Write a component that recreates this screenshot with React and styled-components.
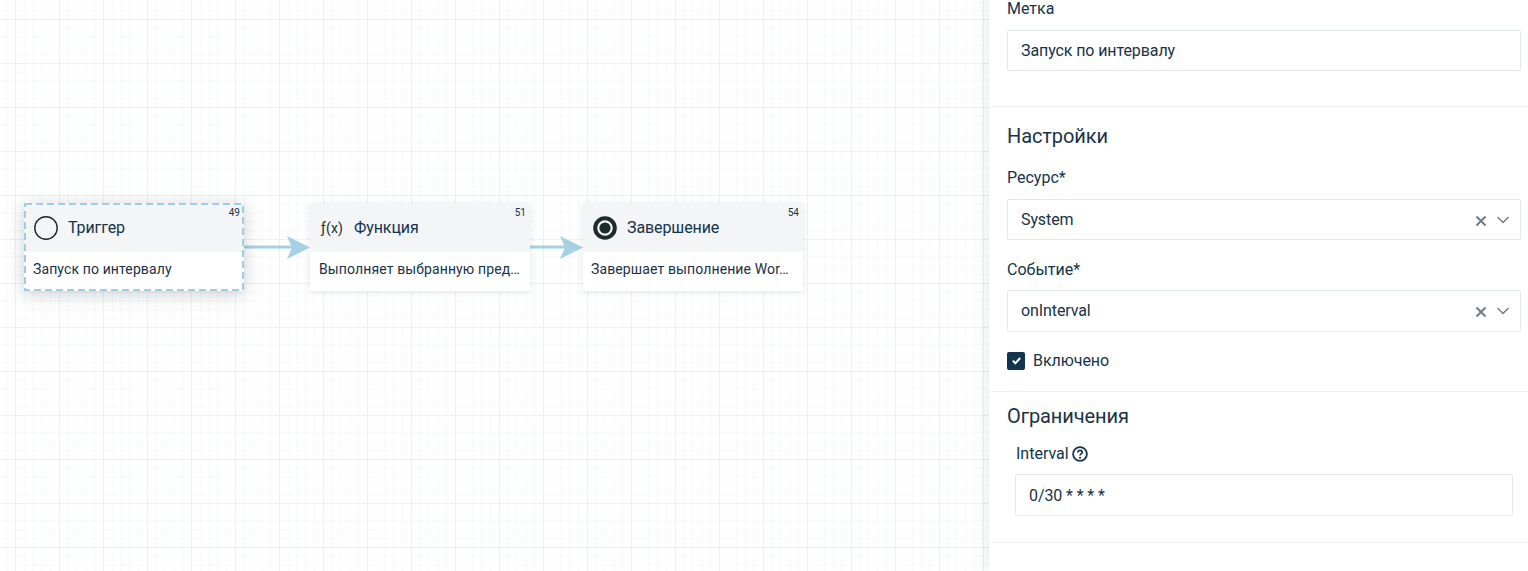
import React from 'react'
import styled, { createGlobalStyle } from 'styled-components'

const GlobalStyle = createGlobalStyle`
  html, body { margin: 0; padding: 0; height: 100%; overflow: hidden; }
  body { font-family: Roboto, "Noto Sans", sans-serif; color: #12344d; background: #fff; }
  #root { height: 100%; }
`

const Page = styled.div`
  display: flex;
  width: 1528px;
  height: 571px;
  overflow: hidden;
`

const Canvas = styled.div`
  position: relative;
  flex: 1;
  background-color: #fff;
  background-image:
    linear-gradient(#edf0f4 1px, transparent 1px),
    linear-gradient(90deg, #edf0f4 1px, transparent 1px),
    linear-gradient(#f6f8fa 1px, transparent 1px),
    linear-gradient(90deg, #f6f8fa 1px, transparent 1px);
  background-size: 44px 44px, 44px 44px, 8.8px 8.8px, 8.8px 8.8px;
  background-position: 0 19px, 15px 0, 0 1.4px, 6.2px 0;
`

const Edges = styled.svg`
  position: absolute;
  left: 0;
  top: 0;
  pointer-events: none;
`

const Node = styled.div`
  position: absolute;
  top: 203px;
  left: ${p => p.$x}px;
  width: 220px;
  height: 88px;
  box-sizing: border-box;
  background: #fff;
  box-shadow: ${p => (p.$selected ? '0 3px 16px rgba(24, 40, 50, 0.22)' : '0 1px 6px rgba(24, 50, 71, 0.12)')};
`

const DashFrame = styled.svg`
  position: absolute;
  left: 0;
  top: 0;
  width: 220px;
  height: 88px;
  pointer-events: none;
`

const NodeHead = styled.div`
  display: flex;
  align-items: center;
  height: 49px;
  padding-left: ${p => p.$pad}px;
  gap: ${p => p.$gap}px;
  background: #f3f5f7;
  font-size: 16px;
  letter-spacing: -0.1px;
  color: #12344d;
`

const NodeId = styled.span`
  position: absolute;
  top: 4px;
  right: 4px;
  font-size: 10px;
  line-height: 12px;
  color: #12344d;
`

const NodeText = styled.div`
  padding: 9px ${p => p.$pad}px 0;
  font-size: 14px;
  line-height: 17px;
  letter-spacing: 0.12px;
  color: #183247;
  white-space: nowrap;
`

const FxIcon = styled.span`
  font-size: 14px;
  color: #1c2b2e;
  letter-spacing: 0.2px;
  width: 23px;
`

const Panel = styled.aside`
  position: relative;
  width: 539px;
  height: 571px;
  overflow: hidden;
  flex-shrink: 0;
  background: #fff;
  box-shadow: -4px 0 10px rgba(24, 50, 71, 0.08);
`

const PanelScroll = styled.div`
  display: flow-root;
  margin-top: -1px;
`

const Section = styled.section`
  box-sizing: border-box;
  height: ${p => p.$h}px;
  padding: ${p => p.$top}px 7px 0 18px;
  border-bottom: 1px solid #f0f2f5;
`

const Heading = styled.h3`
  margin: 0 0 ${p => p.$mb || 0}px;
  font-size: 20px;
  line-height: 24px;
  font-weight: 400;
  letter-spacing: -0.1px;
  color: #183247;
`

const Label = styled.label`
  display: flex;
  align-items: center;
  gap: 3px;
  font-size: 16px;
  line-height: 20px;
  color: #12344d;
  margin-bottom: ${p => p.$mb || 11}px;
`

const Field = styled.div`
  display: flex;
  align-items: center;
  box-sizing: border-box;
  height: ${p => p.$h || 41}px;
  padding: 0 13px ${p => p.$pb || 0}px;
  background: #fff;
  border: 1px solid #e3e8ed;
  border-radius: 2px;
  font-size: 16px;
  letter-spacing: -0.1px;
  color: #183247;
  margin-bottom: ${p => p.$mb || 0}px;
`

const FieldValue = styled.span`
  flex: 1;
`

const Controls = styled.span`
  display: flex;
  align-items: center;
  gap: 10px;
  margin-right: -2px;
`

const CheckRow = styled.div`
  display: flex;
  align-items: center;
  gap: 9px;
  margin-top: 19px;
  font-size: 16px;
  letter-spacing: -0.05px;
  color: #12344d;
`

const CheckBox = styled.span`
  display: flex;
  align-items: center;
  justify-content: center;
  width: 18px;
  height: 18px;
  margin-right: -1px;
  background: #12344d;
  border-radius: 2px;
`

const Indented = styled.div`
  padding: 0 8px;
  margin-top: 16px;
`

const IndentedLabel = styled(Label)`
  padding-left: 1px;
`

const CrossIcon = styled.svg`
  margin-top: 3px;
`

const Cross = () => (
  <CrossIcon width="12" height="12" viewBox="0 0 12 12">
    <path d="M1.5 1.5 L10.5 10.5 M10.5 1.5 L1.5 10.5" stroke="#6f7c87" strokeWidth="2" fill="none" />
  </CrossIcon>
)

const Chevron = () => (
  <svg width="12" height="8" viewBox="0 0 12 8">
    <path d="M0.5 1 L6 6.5 L11.5 1" stroke="#6f7c87" strokeWidth="1.5" fill="none" />
  </svg>
)

const Arrow = ({ x1, x2 }) => (
  <>
    <line x1={x1} y1="247" x2={x2 - 18} y2="247" stroke="#a6d0e4" strokeWidth="3" />
    <polygon points={`${x2 - 23},236 ${x2},247.5 ${x2 - 23},259 ${x2 - 18},247.5`} fill="#a6d0e4" />
  </>
)

export default function App() {
  return (
    <Page>
      <GlobalStyle />
      <Canvas>
        <Edges width="989" height="571">
          <Arrow x1={244} x2={310} />
          <Arrow x1={530} x2={583} />
        </Edges>
        <Node $x={24} $selected>
          <NodeHead $pad={10} $gap={10}>
            <svg width="24" height="24" viewBox="0 0 24 24">
              <circle cx="12" cy="12" r="11.2" fill="none" stroke="#1c2b2e" strokeWidth="1.4" />
            </svg>
            Триггер
          </NodeHead>
          <NodeId>49</NodeId>
          <NodeText $pad={9}>Запуск по интервалу</NodeText>
          <DashFrame viewBox="0 0 220 88">
            <rect x="1" y="1" width="218" height="86" fill="none" stroke="#9fcde4" strokeWidth="2" strokeDasharray="7 4" />
          </DashFrame>
        </Node>
        <Node $x={310}>
          <NodeHead $pad={11} $gap={10}>
            <FxIcon>ƒ(x)</FxIcon>
            Функция
          </NodeHead>
          <NodeId>51</NodeId>
          <NodeText $pad={9}>Выполняет выбранную пред…</NodeText>
        </Node>
        <Node $x={583}>
          <NodeHead $pad={10} $gap={10}>
            <svg width="24" height="24" viewBox="0 0 24 24">
              <circle cx="12" cy="12" r="9.8" fill="none" stroke="#1c2b2e" strokeWidth="4" />
              <circle cx="12" cy="12" r="5.6" fill="#1c2b2e" />
            </svg>
            Завершение
          </NodeHead>
          <NodeId>54</NodeId>
          <NodeText $pad={8}>Завершает выполнение Wor…</NodeText>
        </Node>
      </Canvas>
      <Panel>
        <PanelScroll>
          <Section $h={108} $top={0}>
            <Label>Метка</Label>
            <Field>Запуск по интервалу</Field>
          </Section>
          <Section $h={285} $top={17}>
            <Heading $mb={20}>Настройки</Heading>
            <Label>Ресурс*</Label>
            <Field $mb={20}>
              <FieldValue>System</FieldValue>
              <Controls><Cross /><Chevron /></Controls>
            </Field>
            <Label $mb={10}>Событие*</Label>
            <Field $h={42} $pb={1}>
              <FieldValue>onInterval</FieldValue>
              <Controls><Cross /><Chevron /></Controls>
            </Field>
            <CheckRow>
              <CheckBox>
                <svg width="11" height="11" viewBox="0 0 11 11">
                  <path d="M1.8 5.6 L4.4 8.2 L9.2 3" stroke="#fff" strokeWidth="2" fill="none" />
                </svg>
              </CheckBox>
              Включено
            </CheckRow>
          </Section>
          <Section $h={151} $top={12}>
            <Heading>Ограничения</Heading>
            <Indented>
              <IndentedLabel $mb={10}>
                Interval
                <svg width="16" height="16" viewBox="0 0 16 16">
                  <circle cx="8" cy="8" r="6.9" fill="none" stroke="#12344d" strokeWidth="1.8" />
                  <path d="M5.8 6.4 C5.8 3.7 10.2 3.7 10.2 6.4 C10.2 7.9 8 7.8 8 9.6" fill="none" stroke="#12344d" strokeWidth="1.7" />
                  <circle cx="8" cy="11.8" r="1.1" fill="#12344d" />
                </svg>
              </IndentedLabel>
              <Field $h={42}>0/30 * * * *</Field>
            </Indented>
          </Section>
        </PanelScroll>
      </Panel>
    </Page>
  )
}
